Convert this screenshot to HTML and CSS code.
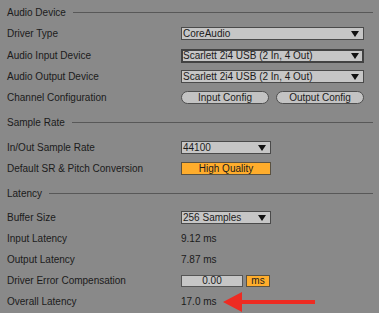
FILE: index.html
```html
<!DOCTYPE html>
<html>
<head>
<meta charset="utf-8">
<link rel="stylesheet" href="styles.css">
</head>
<body>
<div class="panel">
  <div class="hdr hdr1"><span>Audio Device</span><div class="rule"></div></div>
  <div class="row first"><span class="label">Driver Type</span>
    <div class="select wide"><span>CoreAudio</span><i class="tri"></i></div></div>
  <div class="row"><span class="label">Audio Input Device</span>
    <div class="select wide focus"><span>Scarlett 2i4 USB (2 In, 4 Out)</span><i class="tri"></i></div></div>
  <div class="row"><span class="label">Audio Output Device</span>
    <div class="select wide"><span>Scarlett 2i4 USB (2 In, 4 Out)</span><i class="tri"></i></div></div>
  <div class="row"><span class="label">Channel Configuration</span>
    <div class="ctl btns"><div class="pill in">Input Config</div><div class="pill out">Output Config</div></div></div>

  <div class="hdr hdr2"><span>Sample Rate</span><div class="rule"></div></div>
  <div class="row"><span class="label">In/Out Sample Rate</span>
    <div class="select narrow"><span>44100</span><i class="tri"></i></div></div>
  <div class="row"><span class="label">Default SR &amp; Pitch Conversion</span>
    <div class="toggle">High Quality</div></div>

  <div class="hdr hdr3"><span>Latency</span><div class="rule"></div></div>
  <div class="row"><span class="label">Buffer Size</span>
    <div class="select narrow"><span>256 Samples</span><i class="tri"></i></div></div>
  <div class="row"><span class="label">Input Latency</span><span class="val">9.12 ms</span></div>
  <div class="row"><span class="label">Output Latency</span><span class="val">7.87 ms</span></div>
  <div class="row"><span class="label">Driver Error Compensation</span>
    <div class="ctl comp"><div class="num">0.00</div><div class="unit">ms</div></div></div>
  <div class="row"><span class="label">Overall Latency</span>
    <div class="ctl overall"><span class="val">17.0 ms</span>
      <svg class="arrow" width="94" height="22" viewBox="0 0 94 22"><polygon points="0,11 19,1 19,9 92,9 92,13 19,13 19,21" fill="#ee2b22"/></svg>
    </div></div>
</div>
</body>
</html>
```

FILE: styles.css
```css
html, body {
  margin: 0;
  padding: 0;
  background: #898989;
}
body {
  width: 379px;
  height: 313px;
  overflow: hidden;
  font-family: "Liberation Sans", Arial, sans-serif;
  font-size: 10px;
  color: #1b1b1b;
}
.panel {
  padding: 0 6px 0 7px;
}
.hdr {
  display: flex;
  align-items: center;
  gap: 7px;
}
.hdr1 { height: 20px; padding-top: 2px; }
.hdr2 { height: 29px; }
.hdr3 { height: 28px; }
.rule {
  flex: 1;
  height: 1px;
  background: #585858;
}
.row {
  height: 21px;
  display: flex;
  align-items: center;
}
.row.first { height: 23px; }
.label {
  width: 174px;
  flex: none;
}
.select {
  box-sizing: border-box;
  height: 13px;
  border: 1px solid #4a4a4a;
  background: #c6c6c6;
  display: flex;
  align-items: center;
  justify-content: space-between;
  padding: 0 4px 0 1px;
  line-height: 11px;
}
.select.focus {
  height: 14px;
  border: 2px solid #424242;
  padding-left: 0;
  padding-right: 3px;
}
.wide { width: 183px; }
.narrow { width: 90px; }
.tri {
  width: 0;
  height: 0;
  border-left: 4px solid transparent;
  border-right: 4px solid transparent;
  border-top: 6px solid #111;
}
.btns {
  display: flex;
  gap: 7px;
}
.pill {
  box-sizing: border-box;
  height: 13px;
  border: 1px solid #4e4e4e;
  border-radius: 7px;
  background: #c3c3c3;
  text-align: center;
  line-height: 11px;
}
.pill.in { width: 88px; }
.pill.out { width: 88px; }
.toggle {
  box-sizing: border-box;
  width: 90px;
  height: 13px;
  border: 1px solid #5a5140;
  background: #ffad2c;
  text-align: center;
  line-height: 11px;
}
.comp {
  display: flex;
  gap: 3px;
}
.num {
  box-sizing: border-box;
  width: 62px;
  height: 12px;
  border: 1px solid #555;
  background: #c6c6c6;
  text-align: center;
  line-height: 10px;
}
.unit {
  box-sizing: border-box;
  width: 24px;
  height: 12px;
  border: 1px solid #5a5140;
  background: #ffad2c;
  text-align: center;
  line-height: 10px;
}
.overall {
  display: flex;
  align-items: center;
  gap: 6px;
}
.arrow { display: block; }
```
